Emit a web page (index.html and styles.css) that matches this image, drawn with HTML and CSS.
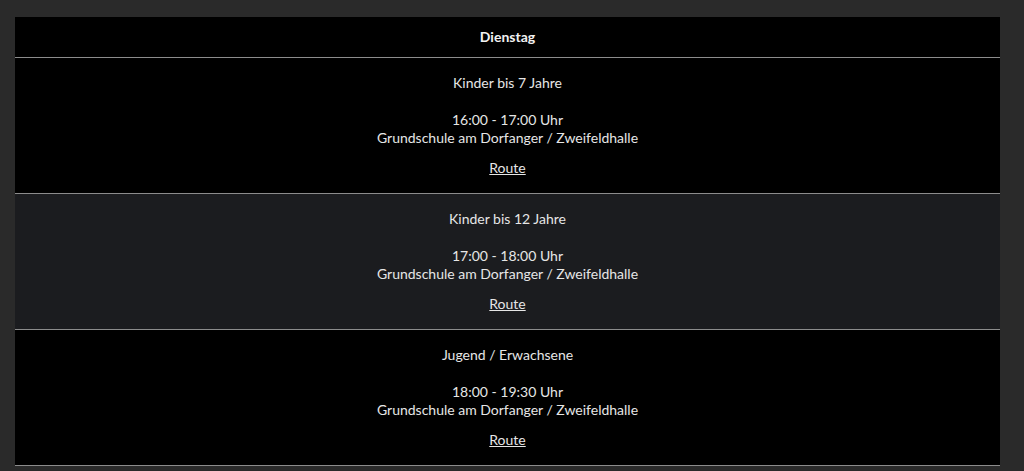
FILE: index.html
```html
<!DOCTYPE html>
<html lang="de">
<head>
    <meta charset="UTF-8">
    <meta name="viewport" content="width=device-width, initial-scale=1.0">
    <title>Trainingszeiten</title>
    <link rel="stylesheet" href="styles.css">
</head>
<body>
    <div class="page">
        <table class="schedule">
            <thead>
                <tr><th>Dienstag</th></tr>
            </thead>
            <tbody>
                <tr>
                    <td>
                        <p>Kinder bis 7 Jahre<br><br>16:00 - 17:00 Uhr<br>Grundschule am Dorfanger / Zweifeldhalle</p>
                        <p><a href="#">Route</a></p>
                    </td>
                </tr>
                <tr class="alt">
                    <td>
                        <p>Kinder bis 12 Jahre<br><br>17:00 - 18:00 Uhr<br>Grundschule am Dorfanger / Zweifeldhalle</p>
                        <p><a href="#">Route</a></p>
                    </td>
                </tr>
                <tr>
                    <td>
                        <p>Jugend / Erwachsene<br><br>18:00 - 19:30 Uhr<br>Grundschule am Dorfanger / Zweifeldhalle</p>
                        <p><a href="#">Route</a></p>
                    </td>
                </tr>
            </tbody>
        </table>
    </div>
</body>
</html>
```

FILE: styles.css
```css
body {
    margin: 0;
    background-color: #2a2a2a;
    font-family: Lato, "Open Sans", sans-serif;
    font-size: 14px;
    color: #e6e6e6;
}
.page {
    padding: 17px 24px 0 15px;
}
.schedule {
    width: 100%;
    border-collapse: collapse;
    background-color: #000;
    text-align: center;
}
.schedule th {
    height: 38px;
    padding: 0 0 2px;
    font-weight: bold;
    border-bottom: 1px solid #8c8c8c;
    color: #f2f2f2;
}
.schedule td {
    height: 135px;
    padding: 0;
    border-bottom: 1px solid #8c8c8c;
    line-height: 18.6px;
    vertical-align: middle;
}
.schedule tr.alt td { background-color: #1b1c1f; }
.schedule p { margin: 0; }
.schedule p + p { margin-top: 11px; }
.schedule a { color: #e6e6e6; text-decoration: underline; }
```
